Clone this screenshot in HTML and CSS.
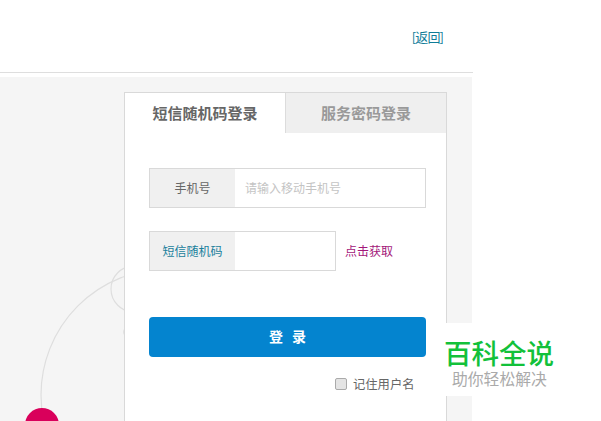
FILE: index.html
```html
<!DOCTYPE html>
<html lang="zh">
<head>
<meta charset="utf-8">
<title>登录</title>
<link rel="stylesheet" href="styles.css">
</head>
<body>
<div class="page">
  <header class="top">
    <a class="back" href="#">[返回]</a>
  </header>
  <main class="stage">
    <svg class="orbit" width="124" height="344" viewBox="0 0 124 344" aria-hidden="true">
      <circle cx="167" cy="318" r="126" fill="none" stroke="#dedede" stroke-width="1.2"/>
      <circle cx="134" cy="212" r="23" fill="none" stroke="#dedede" stroke-width="1.2"/>
      <circle cx="128" cy="255" r="5" fill="#e2e2e2"/>
      <circle cx="42" cy="348" r="17" fill="#d9005b"/>
    </svg>
    <section class="card">
      <div class="tabs">
        <div class="tab tab-active">短信随机码登录</div>
        <div class="tab">服务密码登录</div>
      </div>
      <form class="form">
        <div class="field field-phone">
          <span class="label">手机号</span>
          <span class="placeholder">请输入移动手机号</span>
        </div>
        <div class="code-row">
          <div class="field field-code">
            <span class="label label-code">短信随机码</span>
          </div>
          <a class="get-code" href="#">点击获取</a>
        </div>
        <button class="submit" type="button">登 录</button>
        <label class="remember"><span class="check"></span>记住用户名</label>
      </form>
    </section>
  </main>
  <div class="watermark">
    <div class="wm-title">百科全说</div>
    <div class="wm-sub">助你轻松解决</div>
  </div>
</div>
</body>
</html>
```
FILE: styles.css
```css
* { box-sizing: border-box; }
html, body { margin: 0; padding: 0; background: #fff; }
body { font-family: "Noto Sans CJK SC", "Liberation Sans", sans-serif; }
.page { position: relative; width: 601px; height: 421px; overflow: hidden; }
.top {
  width: 473px; height: 73px;
  border-bottom: 1px solid #dedede;
  display: flex; justify-content: flex-end; align-items: flex-start;
  padding: 28px 30px 0 0;
}
.back { font-size: 13px; line-height: 17px; color: #0f7c98; text-decoration: none; letter-spacing: -0.9px; }
.stage {
  position: relative;
  width: 472px; height: 344px;
  margin-top: 4px;
  background: #f5f5f5;
  padding: 15px 0 0 124px;
  overflow: hidden;
}
.orbit { position: absolute; left: 0; top: 0; }
.card {
  position: relative;
  width: 323px; height: 340px;
  background: #fff;
  border: 1px solid #d9d9d9;
}
.tabs { display: flex; height: 40px; }
.tab {
  flex: 1;
  display: flex; align-items: center; justify-content: center;
  font-size: 15px; font-weight: 700; color: #999;
  background: #efefef;
  padding-bottom: 1px;
}
.tab-active { flex: 0 0 161px; background: #fff; color: #666; border-right: 1px solid #dcdcdc; }
.form { display: flex; flex-direction: column; align-items: flex-start; padding: 35px 0 0 24px; }
.field { display: flex; height: 40px; border: 1px solid #d9d9d9; background: #fff; }
.field-phone { width: 277px; margin-bottom: 23px; }
.field-code { width: 187px; }
.label {
  flex: 0 0 85px;
  display: flex; align-items: center; justify-content: center;
  background: #f0f0f0; color: #666; font-size: 12px;
  padding-bottom: 1px;
}
.label-code { color: #1a7f9c; }
.placeholder { display: flex; align-items: center; padding: 0 0 1px 10px; font-size: 12px; color: #c4c4c4; }
.code-row { display: flex; align-items: center; gap: 9px; margin-bottom: 46px; }
.get-code { font-size: 12px; line-height: 16px; color: #a3177a; text-decoration: none; margin-bottom: 1px; }
.submit {
  width: 277px; height: 40px;
  border: 0; border-radius: 4px;
  background: #0484cf; color: #fff;
  font: 700 14px "Noto Sans CJK SC", sans-serif;
  word-spacing: 6px;
  padding: 0 0 2px;
  margin-bottom: 17px;
}
.remember {
  display: flex; align-items: center; gap: 6px;
  margin-left: 186px;
  font-size: 12.3px; line-height: 20px; color: #666;
}
.check {
  width: 12px; height: 12px;
  border: 1px solid #aaa; border-radius: 2px;
  background: #e4e4e4;
}
.watermark {
  position: absolute; left: 444px; top: 323px;
  width: 133px; height: 73px;
  background: #fff;
  display: flex; flex-direction: column; align-items: flex-start;
  padding-top: 14px;
}
.wm-title { font-size: 27.5px; line-height: 30px; font-weight: 500; color: #12c13a; white-space: nowrap; }
.wm-sub { font-size: 15.8px; line-height: 20px; color: #aaa; margin-left: 8px; margin-top: 2px; white-space: nowrap; }
```
